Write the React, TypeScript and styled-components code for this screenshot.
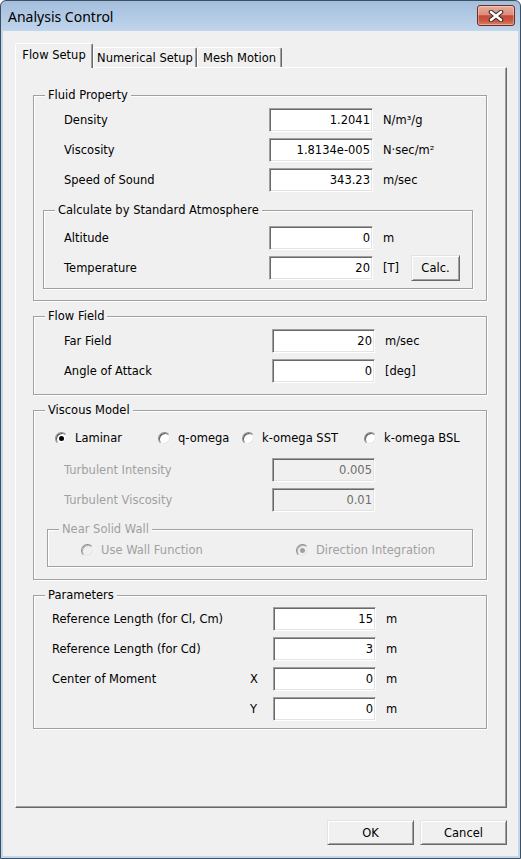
import React from 'react';
import styled, { createGlobalStyle } from 'styled-components';

const FONT = `"DejaVu Sans", Tahoma, Verdana, sans-serif`;
const SIZE = '11.5px';

const GlobalStyle = createGlobalStyle`
  html, body { margin: 0; padding: 0; background: #ffffff; }
  *, *::before, *::after { box-sizing: border-box; }
`;

const Window = styled.div`
  width: 521px;
  height: 859px;
  display: flex;
  flex-direction: column;
  border: 1px solid #3d4f63;
  border-radius: 6px 6px 0 0;
  background: linear-gradient(180deg, #a3bedc 0px, #b9cfe8 22px, #c2d6ec 31px, #c2d6ec 100%);
  font-family: ${FONT};
  font-size: ${SIZE};
  color: #000;
  overflow: hidden;
`;

const TitleBar = styled.div`
  height: 30px;
  flex: none;
  display: flex;
  align-items: center;
  justify-content: space-between;
  padding: 0 5px 0 7px;
`;

const TitleText = styled.span`
  font-family: "Noto Sans", "Open Sans", sans-serif;
  font-size: 14px;
  color: #000;
`;

const CloseButton = styled.div`
  width: 38px;
  height: 21px;
  margin-top: -1px;
  border: 1px solid #6e2b20;
  border-radius: 3px;
  background: linear-gradient(180deg, #e9ab9c 0%, #dc8d7b 45%, #c44a34 52%, #c95842 78%, #dd8069 100%);
  box-shadow: inset 0 0 0 1px rgba(255, 255, 255, 0.35);
  display: flex;
  align-items: center;
  justify-content: center;
`;

const Client = styled.div`
  flex: 1;
  margin: 0 2px 2px;
  background: #f0f0f0;
  padding: 12px 11px 0 12px;
  display: flex;
  flex-direction: column;
`;

const TabStrip = styled.div`
  display: flex;
  align-items: flex-end;
  height: 25px;
  margin-bottom: -1px;
  position: relative;
  z-index: 1;
`;

const Tab = styled.div<{ $active?: boolean; $w: number }>`
  width: ${p => p.$w}px;
  height: ${p => (p.$active ? '25px' : '20px')};
  margin-bottom: ${p => (p.$active ? '0' : '1px')};
  padding-bottom: ${p => (p.$active ? '2px' : '0')};
  display: flex;
  align-items: center;
  justify-content: center;
  background: #f0f0f0;
  border-top: 1px solid #ffffff;
  border-left: 1px solid #ffffff;
  border-right: 1px solid #696969;
  border-radius: 2px 2px 0 0;
  box-shadow: inset -1px 0 0 #a0a0a0;
  white-space: nowrap;
  color: #000;
`;

const Panel = styled.div`
  height: 741px;
  flex: none;
  border: 1px solid;
  border-color: #ffffff #696969 #696969 #ffffff;
  box-shadow: inset -1px -1px 0 #a0a0a0;
  padding: 27px 19px 0 17px;
  display: flex;
  flex-direction: column;
  gap: 15px;
`;

const Group = styled.div<{ $pt: number; $pr: number; $pb: number; $pl: number; $mt?: number; $ml?: number }>`
  position: relative;
  border: 1px solid #a0a0a0;
  box-shadow: inset 1px 1px 0 #ffffff, 1px 1px 0 #ffffff;
  padding: ${p => `${p.$pt}px ${p.$pr}px ${p.$pb}px ${p.$pl}px`};
  margin-top: ${p => p.$mt ?? 0}px;
  margin-left: ${p => p.$ml ?? 0}px;
  display: flex;
  flex-direction: column;
`;

const GroupTitle = styled.span<{ $disabled?: boolean }>`
  position: absolute;
  top: -8px;
  left: 11px;
  padding: 0 3px;
  line-height: 14px;
  background: #f0f0f0;
  white-space: nowrap;
  color: ${p => (p.$disabled ? '#a0a0a0' : '#000')};
`;

const Rows = styled.div`
  display: flex;
  flex-direction: column;
  gap: 6px;
`;

const FieldRow = styled.div<{ $indent: number; $label: number; $input: number }>`
  display: grid;
  grid-template-columns: ${p => p.$label}px ${p => p.$input}px auto;
  align-items: center;
  height: 24px;
  padding-left: ${p => p.$indent}px;
`;

const ParamRow = styled.div`
  display: grid;
  grid-template-columns: 198px 23px 103px auto;
  align-items: center;
  height: 24px;
`;

const Label = styled.span<{ $disabled?: boolean }>`
  white-space: nowrap;
  color: ${p => (p.$disabled ? '#a0a0a0' : '#000')};
`;

const TextBox = styled.input<{ $disabled?: boolean }>`
  width: 100%;
  height: 24px;
  margin: 0;
  padding: 0 2px 1px 2px;
  text-align: right;
  font-family: ${FONT};
  font-size: ${SIZE};
  color: ${p => (p.$disabled ? '#6d6d6d' : '#000')};
  background: ${p => (p.$disabled ? '#f0f0f0' : '#ffffff')};
  border: 1px solid;
  border-color: #a0a0a0 #ffffff #ffffff #a0a0a0;
  box-shadow: inset 1px 1px 0 #696969, inset -1px -1px 0 #e3e3e3;
  outline: none;
`;

const Unit = styled.span`
  margin-left: 10px;
  display: flex;
  align-items: center;
  gap: 12px;
  white-space: nowrap;
`;

const PushButton = styled.button<{ $w: number; $h: number }>`
  width: ${p => p.$w}px;
  height: ${p => p.$h}px;
  margin: 0;
  padding: 0;
  font-family: ${FONT};
  font-size: ${SIZE};
  color: #000;
  background: #f0f0f0;
  border: 1px solid;
  border-color: #e3e3e3 #696969 #696969 #e3e3e3;
  box-shadow: inset 1px 1px 0 #ffffff, inset -1px -1px 0 #a0a0a0;
  flex: none;
`;

const CalcButton = styled(PushButton)`
  margin: -1px 0;
`;

const RadioRow = styled.div<{ $cols: string; $indent: number }>`
  display: grid;
  grid-template-columns: ${p => p.$cols};
  align-items: center;
  height: 14px;
  padding-left: ${p => p.$indent}px;
`;

const RadioItem = styled.div<{ $disabled?: boolean }>`
  display: flex;
  align-items: center;
  gap: 7px;
  white-space: nowrap;
  color: ${p => (p.$disabled ? '#a0a0a0' : '#000')};
`;

const RadioDot = styled.span<{ $checked?: boolean; $disabled?: boolean }>`
  position: relative;
  flex: none;
  width: 13px;
  height: 13px;
  border-radius: 50%;
  border: 1px solid;
  border-color: #8c8c8c #f4f4f4 #f4f4f4 #8c8c8c;
  background: ${p => (p.$disabled ? '#f0f0f0' : '#ffffff')};
  box-shadow: inset 1px 1px 0 ${p => (p.$disabled ? '#b8b8b8' : '#5a5a5a')}, inset -1px -1px 0 #e3e3e3;
  &::after {
    content: '';
    display: ${p => (p.$checked ? 'block' : 'none')};
    position: absolute;
    left: 3px;
    top: 3px;
    width: 5px;
    height: 5px;
    border-radius: 50%;
    background: ${p => (p.$disabled ? '#a0a0a0' : '#000')};
  }
`;

const Spacer = styled.div<{ $h: number }>`
  height: ${p => p.$h}px;
  flex: none;
`;

const ButtonBar = styled.div`
  margin-top: 12px;
  display: flex;
  justify-content: flex-end;
  gap: 6px;
`;

type Field = { label: string; value: string; unit: string };

const fluid: Field[] = [
  { label: 'Density', value: '1.2041', unit: 'N/m³/g' },
  { label: 'Viscosity', value: '1.8134e-005', unit: 'N·sec/m²' },
  { label: 'Speed of Sound', value: '343.23', unit: 'm/sec' },
];

const flow: Field[] = [
  { label: 'Far Field', value: '20', unit: 'm/sec' },
  { label: 'Angle of Attack', value: '0', unit: '[deg]' },
];

const params = [
  { label: 'Reference Length (for Cl, Cm)', axis: '', value: '15' },
  { label: 'Reference Length (for Cd)', axis: '', value: '3' },
  { label: 'Center of Moment', axis: 'X', value: '0' },
  { label: '', axis: 'Y', value: '0' },
];

const CloseGlyph = () => (
  <svg width="16" height="12" viewBox="0 0 16 12">
    <path d="M3 2 L13 10 M13 2 L3 10" stroke="#3b2a28" strokeWidth="4.6" strokeLinecap="round" fill="none" />
    <path d="M3 2 L13 10 M13 2 L3 10" stroke="#ffffff" strokeWidth="2.6" strokeLinecap="round" fill="none" />
  </svg>
);

export default function App() {
  return (
    <>
      <GlobalStyle />
      <Window>
        <TitleBar>
          <TitleText>Analysis Control</TitleText>
          <CloseButton>
            <CloseGlyph />
          </CloseButton>
        </TitleBar>
        <Client>
          <TabStrip>
            <Tab $active $w={78}>Flow Setup</Tab>
            <Tab $w={104}>Numerical Setup</Tab>
            <Tab $w={85}>Mesh Motion</Tab>
          </TabStrip>
          <Panel>
            <Group $pt={12} $pr={13} $pb={11} $pl={9}>
              <GroupTitle>Fluid Property</GroupTitle>
              <Rows>
                {fluid.map(f => (
                  <FieldRow key={f.label} $indent={21} $label={205} $input={104}>
                    <Label>{f.label}</Label>
                    <TextBox readOnly value={f.value} />
                    <Unit>{f.unit}</Unit>
                  </FieldRow>
                ))}
              </Rows>
              <Group $pt={15} $pr={0} $pb={8} $pl={20} $mt={18}>
                <GroupTitle>Calculate by Standard Atmosphere</GroupTitle>
                <Rows>
                  <FieldRow $indent={0} $label={205} $input={104}>
                    <Label>Altitude</Label>
                    <TextBox readOnly value="0" />
                    <Unit>m</Unit>
                  </FieldRow>
                  <FieldRow $indent={0} $label={205} $input={104}>
                    <Label>Temperature</Label>
                    <TextBox readOnly value="20" />
                    <Unit>
                      [T]
                      <CalcButton $w={49} $h={26}>Calc.</CalcButton>
                    </Unit>
                  </FieldRow>
                </Rows>
              </Group>
            </Group>

            <Group $pt={12} $pr={13} $pb={11} $pl={9}>
              <GroupTitle>Flow Field</GroupTitle>
              <Rows>
                {flow.map(f => (
                  <FieldRow key={f.label} $indent={21} $label={208} $input={103}>
                    <Label>{f.label}</Label>
                    <TextBox readOnly value={f.value} />
                    <Unit>{f.unit}</Unit>
                  </FieldRow>
                ))}
              </Rows>
            </Group>

            <Group $pt={20} $pr={13} $pb={12} $pl={9}>
              <GroupTitle>Viscous Model</GroupTitle>
              <RadioRow $cols="103px 84px 122px auto" $indent={12}>
                <RadioItem><RadioDot $checked />Laminar</RadioItem>
                <RadioItem><RadioDot />q-omega</RadioItem>
                <RadioItem><RadioDot />k-omega SST</RadioItem>
                <RadioItem><RadioDot />k-omega BSL</RadioItem>
              </RadioRow>
              <Spacer $h={13} />
              <Rows>
                <FieldRow $indent={21} $label={208} $input={103}>
                  <Label $disabled>Turbulent Intensity</Label>
                  <TextBox readOnly $disabled value="0.005" />
                </FieldRow>
                <FieldRow $indent={21} $label={208} $input={103}>
                  <Label $disabled>Turbulent Viscosity</Label>
                  <TextBox readOnly $disabled value="0.01" />
                </FieldRow>
              </Rows>
              <Group $pt={13} $pr={0} $pb={9} $pl={33} $mt={17} $ml={4}>
                <GroupTitle $disabled>Near Solid Wall</GroupTitle>
                <RadioRow $cols="215px auto" $indent={0}>
                  <RadioItem $disabled><RadioDot $disabled />Use Wall Function</RadioItem>
                  <RadioItem $disabled><RadioDot $disabled $checked />Direction Integration</RadioItem>
                </RadioRow>
              </Group>
            </Group>

            <Group $pt={11} $pr={13} $pb={7} $pl={18}>
              <GroupTitle>Parameters</GroupTitle>
              <Rows>
                {params.map((p, i) => (
                  <ParamRow key={i}>
                    <Label>{p.label}</Label>
                    <Label>{p.axis}</Label>
                    <TextBox readOnly value={p.value} />
                    <Unit>m</Unit>
                  </ParamRow>
                ))}
              </Rows>
            </Group>
          </Panel>
          <ButtonBar>
            <PushButton $w={87} $h={25}>OK</PushButton>
            <PushButton $w={87} $h={25}>Cancel</PushButton>
          </ButtonBar>
        </Client>
      </Window>
    </>
  );
}
